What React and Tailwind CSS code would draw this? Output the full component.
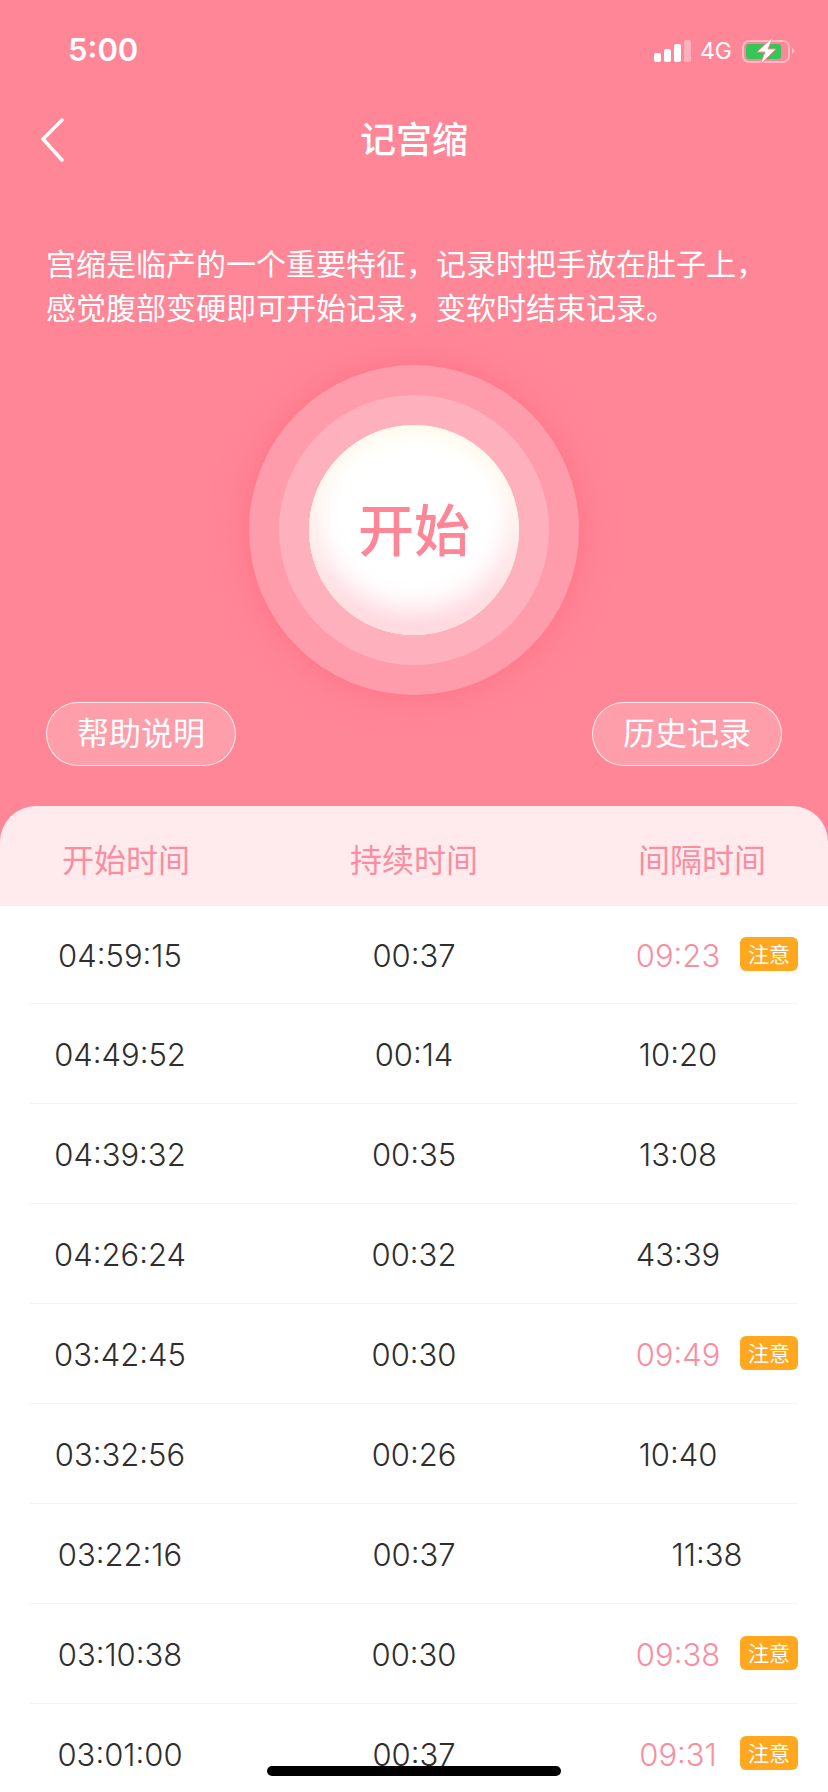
const cjk = "font-['Noto_Sans_CJK_SC','Noto_Sans',sans-serif]";

const rows = [
  { start: '04:59:15', last: '00:37', gap: '09:23', warn: true },
  { start: '04:49:52', last: '00:14', gap: '10:20' },
  { start: '04:39:32', last: '00:35', gap: '13:08' },
  { start: '04:26:24', last: '00:32', gap: '43:39' },
  { start: '03:42:45', last: '00:30', gap: '09:49', warn: true },
  { start: '03:32:56', last: '00:26', gap: '10:40' },
  { start: '03:22:16', last: '00:37', gap: '11:38', far: true },
  { start: '03:10:38', last: '00:30', gap: '09:38', warn: true },
  { start: '03:01:00', last: '00:37', gap: '09:31', warn: true },
];

function Signal() {
  return (
    <svg width="38" height="24" viewBox="0 0 38 24">
      <rect x="0" y="14" width="7" height="9" rx="2" fill="#fff" />
      <rect x="10" y="10" width="7" height="13" rx="2" fill="#fff" />
      <rect x="20" y="5" width="7" height="18" rx="2" fill="#fff" />
      <rect x="30" y="1" width="7" height="22" rx="2" fill="#fff" fillOpacity="0.35" />
    </svg>
  );
}

function Battery() {
  return (
    <svg width="54" height="28" viewBox="0 0 54 28">
      <rect x="1" y="4" width="46" height="21" rx="6" fill="none" stroke="#fff" strokeOpacity="0.45" strokeWidth="2" />
      <rect x="4" y="7" width="35" height="15" rx="3" fill="#33c759" />
      <path d="M50 11 L53 14 L50 17 Z" fill="#fff" fillOpacity="0.5" />
      <path d="M31 0 L15 15 L23 15 L18 28 L34 12 L26 12 Z" fill="#fff" stroke="#ff8697" strokeWidth="1" />
    </svg>
  );
}

function Row({ row, first }) {
  return (
    <div className={`mx-[30px] flex items-center border-b border-[#f3f3f3] pt-[3px] text-[#2e2e2e] ${first ? 'h-[98px]' : 'h-[100px]'}`}>
      <div className="w-[180px] text-center">{row.start}</div>
      <div className="w-[408px] text-center">{row.last}</div>
      <div className="flex flex-1 items-center">
        <span className={`w-[96px] text-center ${row.far ? 'ml-[41px]' : 'ml-[12px]'} ${row.warn ? 'text-[#fb8da0]' : ''}`}>{row.gap}</span>
        {row.warn && (
          <span className={`${cjk} absolute left-[740px] mb-[4px] flex h-[34px] w-[58px] items-center justify-center rounded-[6px] bg-[#ffa81f] text-[21px] font-normal text-white`}>
            注意
          </span>
        )}
      </div>
    </div>
  );
}

export default function App() {
  return (
    <div className={`${cjk} relative h-[1792px] w-[828px] overflow-hidden bg-[#ff8697] text-white`}>
      {/* Status bar */}
      <div className="flex h-[100px] items-start justify-between pl-[68px] pr-[32px] pt-[31px]">
        <div className="font-['Inter',sans-serif] text-[31px] font-semibold leading-[38px]">5:00</div>
        <div className="flex items-center pt-[6px]">
          <Signal />
          <span className="ml-[8px] font-['Inter',sans-serif] text-[23px] leading-[26px]">4G</span>
          <span className="ml-[10px]"><Battery /></span>
        </div>
      </div>

      {/* Title bar */}
      <div className="relative flex h-[78px] items-center justify-center">
        <svg className="absolute left-[38px] top-[16px]" width="28" height="46" viewBox="0 0 28 46">
          <path d="M24 4 L5 23 L24 44" fill="none" stroke="#fff" strokeWidth="3.5" strokeLinecap="round" strokeLinejoin="round" />
        </svg>
        <div className="pb-[4px] text-[36px] font-medium">记宫缩</div>
      </div>

      <p className="mt-[62px] px-[46px] text-[30px] font-normal leading-[44px]">
        宫缩是临产的一个重要特征，记录时把手放在肚子上，<br />
        感觉腹部变硬即可开始记录，变软时结束记录。
      </p>

      {/* Start button */}
      <div className="mt-[37px] flex justify-center">
        <div className="flex h-[330px] w-[330px] items-center justify-center rounded-full bg-[#ff9cab] shadow-[0_0_36px_#ff7287]">
          <div className="flex h-[270px] w-[270px] items-center justify-center rounded-full bg-[#ffb0bd]">
            <div className="flex h-[210px] w-[210px] items-center justify-center rounded-full bg-white pb-[7px] text-[56px] font-medium text-[#ff8697] shadow-[inset_0_10px_20px_#fffaec,inset_0_-22px_30px_#ffd3db]">
              开始
            </div>
          </div>
        </div>
      </div>

      <div className="mt-[7px] flex justify-between pl-[46px] pr-[46px] text-[32px]">
        <div className="flex h-[64px] w-[190px] items-center justify-center rounded-[32px] border border-white/80 bg-white/20 pb-[6px]">帮助说明</div>
        <div className="flex h-[64px] w-[190px] items-center justify-center rounded-[32px] border border-white/80 bg-white/20 pb-[6px]">历史记录</div>
      </div>

      {/* Record table */}
      <div className="mt-[40px] flex h-[100px] items-center rounded-t-[36px] bg-[#ffebee] pt-[3px] text-[32px] text-[#fb8da0]">
        <div className="w-[252px] text-center">开始时间</div>
        <div className="w-[324px] text-center">持续时间</div>
        <div className="w-[252px] text-center">间隔时间</div>
      </div>
      <div className="bg-white font-['Inter',sans-serif] text-[31px] font-light">
        {rows.map((row, i) => (
          <Row key={row.start} row={row} first={i === 0} />
        ))}
      </div>

      {/* Home indicator */}
      <div className="absolute left-[267px] top-[1766px] h-[10px] w-[294px] rounded-full bg-black" />
    </div>
  );
}
